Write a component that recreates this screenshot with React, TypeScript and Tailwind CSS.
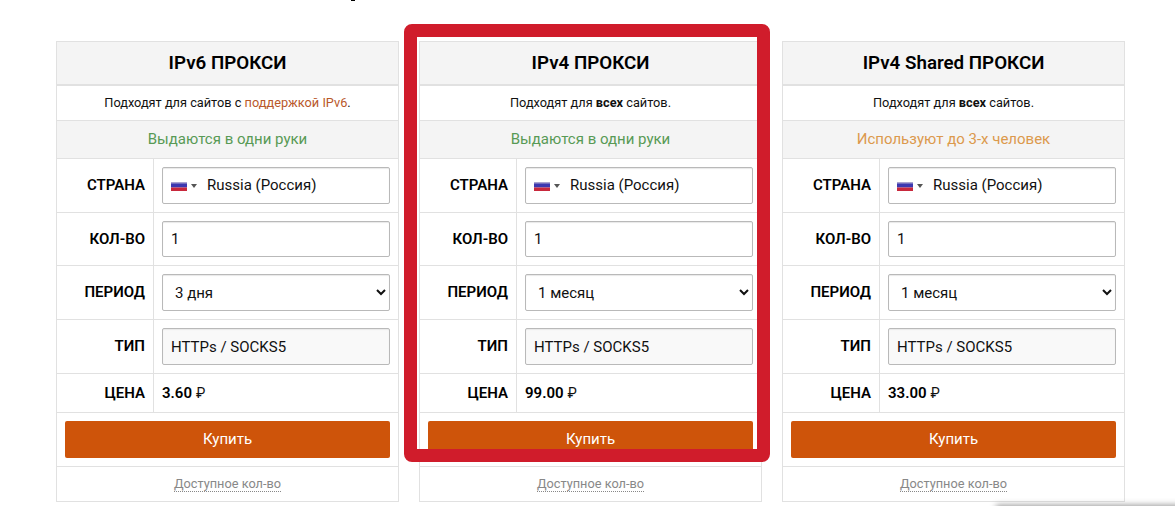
import { ReactNode, useState } from "react";

interface Plan {
  title: string;
  description: ReactNode;
  note: string;
  noteColor: string;
  periods: string[];
  price: string;
}

const plans: Plan[] = [
  {
    title: "IPv6 ПРОКСИ",
    description: (
      <>
        Подходят для сайтов с <a className="text-[#b9582a]">поддержкой IPv6</a>.
      </>
    ),
    note: "Выдаются в одни руки",
    noteColor: "text-[#589a55]",
    periods: ["3 дня"],
    price: "3.60",
  },
  {
    title: "IPv4 ПРОКСИ",
    description: (
      <>
        Подходят для <b className="font-bold">всех</b> сайтов.
      </>
    ),
    note: "Выдаются в одни руки",
    noteColor: "text-[#589a55]",
    periods: ["1 месяц"],
    price: "99.00",
  },
  {
    title: "IPv4 Shared ПРОКСИ",
    description: (
      <>
        Подходят для <b className="font-bold">всех</b> сайтов.
      </>
    ),
    note: "Используют до 3-х человек",
    noteColor: "text-[#dc994c]",
    periods: ["1 месяц"],
    price: "33.00",
  },
];

function Row({ label, height, children }: { label: string; height: string; children: ReactNode }) {
  return (
    <div className={`flex border-b border-[#e1e1e1] ${height}`}>
      <div className="flex w-[97px] shrink-0 items-center justify-end border-r border-[#e1e1e1] pr-2 pb-px font-semibold text-black">
        {label}
      </div>
      <div className="flex grow items-center px-2">{children}</div>
    </div>
  );
}

function Flag() {
  return (
    <svg className="mt-1" width="16" height="9" viewBox="0 0 16 9">
      <rect width="16" height="2" fill="#a9a4d0" />
      <rect y="1.5" width="16" height="4" fill="#3c38b0" />
      <rect y="5.5" width="16" height="3.5" fill="#c8283c" />
    </svg>
  );
}

function PlanCard({ plan }: { plan: Plan }) {
  const [count, setCount] = useState("1");

  return (
    <div className="w-[343px] border-x border-t border-[#e1e1e1]">
      <h2 className="flex h-11 items-center justify-center border-b-2 border-[#e1e1e1] bg-[#f4f4f4] text-[18.75px] font-semibold text-black">
        {plan.title}
      </h2>
      <p className="flex h-[35px] items-center justify-center border-b border-[#e1e1e1] text-[12.75px]">
        <span>{plan.description}</span>
      </p>
      <p
        className={`flex h-[38px] items-center justify-center border-b border-[#e1e1e1] bg-[#f4f4f4] pb-0.5 ${plan.noteColor}`}
      >
        {plan.note}
      </p>
      <Row label="СТРАНА" height="h-[54px]">
        <div className="flex h-[37px] w-full items-center rounded-xs border border-[#b9b9b9] bg-white pb-0.5 pl-2 shadow-[inset_0_1px_1px_#e8e8e8]">
          <Flag />
          <span className="mt-0.5 mr-2.5 ml-1 border-x-3 border-t-4 border-x-transparent border-t-[#555]" />
          Russia (Россия)
        </div>
      </Row>
      <Row label="КОЛ-ВО" height="h-[53px]">
        <input
          className="h-9 w-full rounded-xs border border-[#b9b9b9] bg-white px-2 shadow-[inset_0_1px_1px_#e8e8e8] outline-none"
          value={count}
          onChange={(e) => setCount(e.target.value)}
        />
      </Row>
      <Row label="ПЕРИОД" height="h-[54px]">
        <select className="h-[37px] w-full rounded-xs border border-[#b9b9b9] bg-white pr-px pl-2 shadow-[inset_0_1px_1px_#e8e8e8]">
          {plan.periods.map((p) => (
            <option key={p}>{p}</option>
          ))}
        </select>
      </Row>
      <Row label="ТИП" height="h-[54px]">
        <input
          className="h-[37px] w-full rounded-xs border border-[#b9b9b9] bg-[#f9f9f9] px-2 shadow-[inset_0_1px_1px_#e8e8e8] outline-none"
          value="HTTPs / SOCKS5"
          readOnly
        />
      </Row>
      <Row label="ЦЕНА" height="h-[39px]">
        <span className="font-semibold text-black">{plan.price}</span>
        <span className="ml-1 text-sm">₽</span>
      </Row>
      <div className="flex h-[54px] items-center border-b border-[#e1e1e1] px-2">
        <button className="h-[37px] w-full rounded-xs bg-[#ce540a] pb-0.5 text-white">Купить</button>
      </div>
      <div className="flex h-[35px] items-center justify-center border-b border-[#e1e1e1]">
        <a className="border-b border-dotted border-[#888] text-[12.75px] leading-[15px] text-[#888]">
          Доступное кол-во
        </a>
      </div>
    </div>
  );
}

function App() {
  return (
    <div className="relative h-[506px] w-[1175px] overflow-hidden bg-white pt-[41px] pl-14 font-['Roboto',sans-serif] text-[15px] leading-5 text-[#111]">
      {/* bottom edge of the page heading */}
      <div className="absolute top-0 left-[351px] h-px w-1 bg-black" />
      <div className="flex gap-5">
        {plans.map((plan) => (
          <PlanCard key={plan.title} plan={plan} />
        ))}
      </div>
      <div className="absolute top-6 left-[404px] h-[438px] w-[366px] rounded-lg border-[13px] border-[#d01c2b]" />
      <div className="absolute top-[507px] left-[998px] h-5 w-[200px] shadow-[0_0_6px_2px_#999]" />
    </div>
  );
}

export default App;
